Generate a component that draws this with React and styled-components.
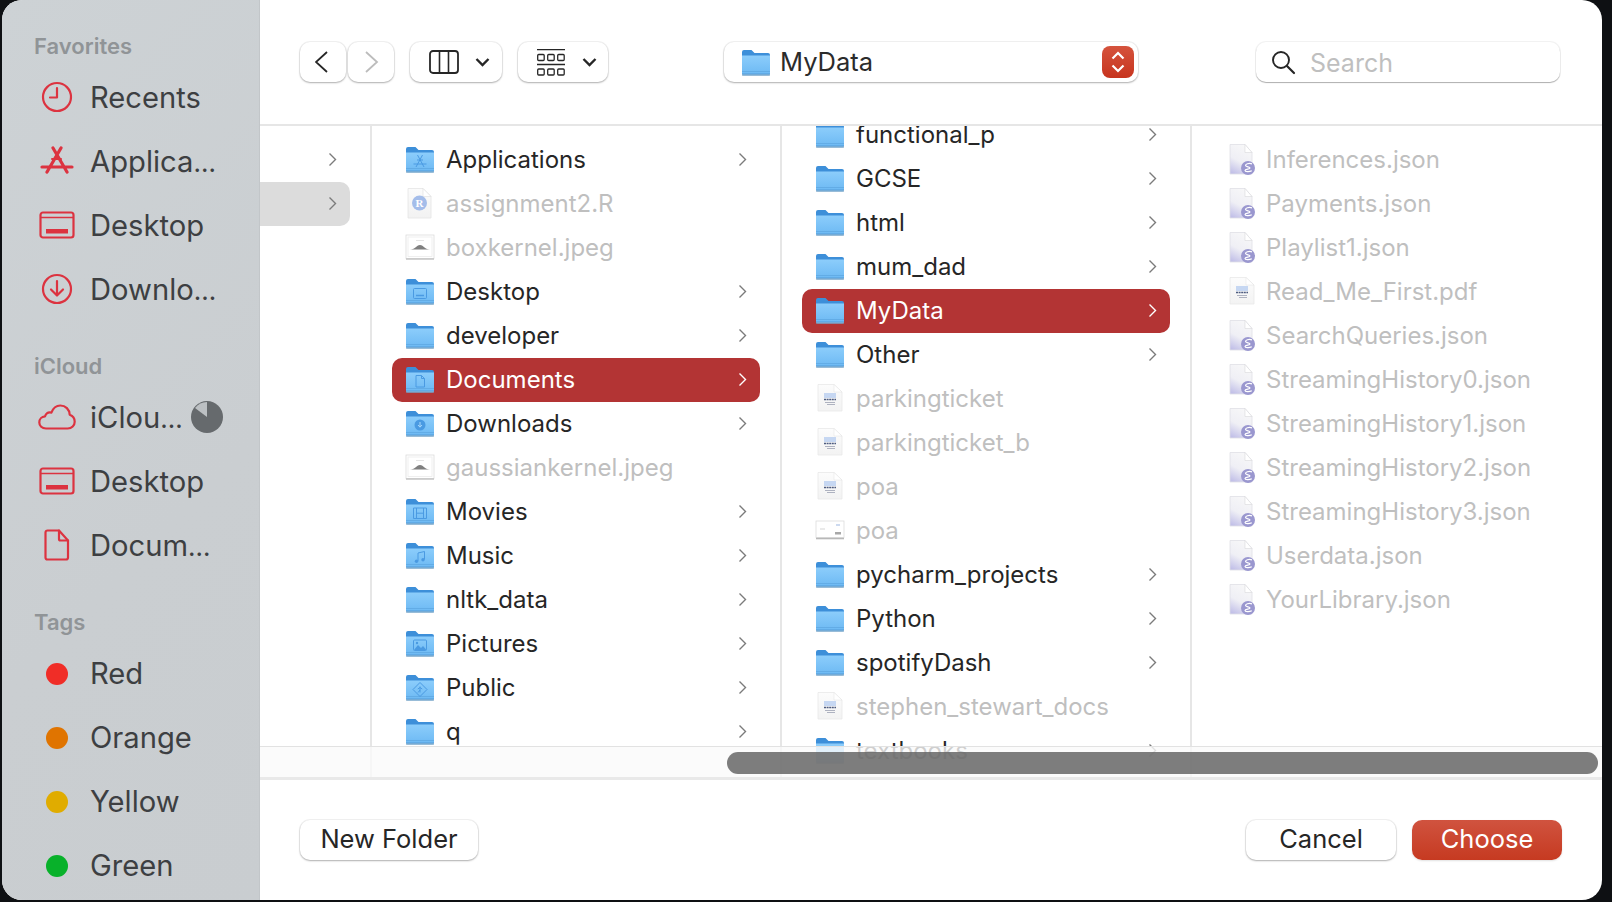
import React from "react";
import styled, { createGlobalStyle } from "styled-components";

const GlobalStyle = createGlobalStyle`
    html, body {
        margin: 0;
        padding: 0;
        height: 100%;
        background: #0e1013;
        overflow: hidden;
    }
    * {
        box-sizing: border-box;
    }
`;

const Page = styled.div`
    width: 1612px;
    height: 902px;
    padding: 0 10px 2px 2px;
    font-family: Inter, "Liberation Sans", sans-serif;
`;

const Dialog = styled.div`
    display: flex;
    width: 100%;
    height: 100%;
    background: #fff;
    border-radius: 20px;
    overflow: hidden;
`;

const Sidebar = styled.aside`
    flex: 0 0 258px;
    padding-top: 31px;
    background: linear-gradient(135deg, #cdd2d5 0%, #caced1 60%, #c9cdd0 100%);
    box-shadow: inset -1px 0 0 #c2c6c9;
    overflow: hidden;
`;

const SectionLabel = styled.div`
    height: 30px;
    margin-bottom: 4px;
    padding-left: 32px;
    font-size: 22px;
    font-weight: 600;
    line-height: 30px;
    color: #909497;
`;

const Section = styled.section`
    margin-bottom: 30px;
`;

const SideItem = styled.div`
    display: flex;
    align-items: center;
    height: 64px;
    font-size: 29.2px;
    color: #3d3f42;
`;

const SideIcon = styled.span`
    display: flex;
    flex: 0 0 88px;
    justify-content: center;
    padding-left: 22px;
`;

const Dots = styled.span`
    font-size: 26px;
`;

const Dot = styled.span`
    width: 22px;
    height: 22px;
    margin-top: 2px;
    border-radius: 50%;
    background: ${(p) => p.$color};
`;

const Pie = styled.svg`
    margin-left: 8px;
`;

const Main = styled.main`
    display: flex;
    flex: 1;
    flex-direction: column;
    min-width: 0;
`;

const Toolbar = styled.header`
    display: flex;
    flex: 0 0 126px;
    align-items: flex-start;
    padding: 42px 42px 0 40px;
    border-bottom: 2px solid #e6e6e6;
`;

const ToolButton = styled.button`
    display: flex;
    align-items: center;
    justify-content: ${(p) => (p.$pad ? "flex-start" : "center")};
    gap: ${(p) => p.$gap || 0}px;
    width: ${(p) => p.$width}px;
    height: 40px;
    margin-left: ${(p) => p.$left || 0}px;
    padding: 0 0 0 ${(p) => p.$pad || 0}px;
    border: 0;
    border-radius: 10px;
    background: #fff;
    box-shadow: 0 1px 2px rgba(0, 0, 0, 0.28), 0 0 0 1px rgba(0, 0, 0, 0.05);
`;

const PathControl = styled.div`
    display: flex;
    align-items: center;
    width: 414px;
    height: 40px;
    margin-left: 116px;
    padding: 0 4px 0 18px;
    border-radius: 10px;
    background: #fff;
    box-shadow: 0 1px 2px rgba(0, 0, 0, 0.28), 0 0 0 1px rgba(0, 0, 0, 0.05);
    font-size: 25.5px;
    color: #2b2b2b;
`;

const PathName = styled.span`
    flex: 1;
    margin: -2px 0 0 10px;
`;

const Stepper = styled.span`
    display: flex;
    align-items: center;
    justify-content: center;
    width: 32px;
    height: 32px;
    border-radius: 8px;
    background: linear-gradient(#d5533d, #c7341e);
`;

const SearchBox = styled.div`
    display: flex;
    align-items: center;
    gap: 14px;
    width: 304px;
    height: 40px;
    margin-left: 118px;
    padding-left: 15px;
    border-radius: 10px;
    background: #fff;
    box-shadow: 0 1px 1px rgba(0, 0, 0, 0.28), 0 0 0 1px rgba(0, 0, 0, 0.05);
    font-size: 25px;
    color: #bfbfbf;
`;

const SearchText = styled.span`
    margin-top: 2px;
`;

const Browser = styled.div`
    position: relative;
    display: flex;
    flex: 0 0 654px;
    border-bottom: 3px solid #e9e9e9;
    overflow: hidden;
`;

const Column = styled.div`
    flex: ${(p) => (p.$width ? `0 0 ${p.$width}px` : "1")};
    padding-top: ${(p) => p.$top}px;
    padding-left: ${(p) => p.$inset || 0}px;
    border-right: ${(p) => (p.$last ? "0" : "2px solid #e6e6e6")};
`;

const ScrolledList = styled.div`
    margin-top: ${(p) => p.$shift}px;
`;

const FirstColumnRow = styled.div`
    display: flex;
    align-items: center;
    justify-content: flex-end;
    width: 90px;
    height: 44px;
    padding: 0 13px 2px 0;
    border-radius: 0 10px 10px 0;
    background: ${(p) => (p.$selected ? "#dcdcdc" : "transparent")};
`;

const Row = styled.div`
    display: flex;
    align-items: center;
    width: 368px;
    height: 44px;
    padding: 0 13px 2px ${(p) => p.$pad || 14}px;
    border-radius: 10px;
    background: ${(p) => (p.$selected ? "#b33434" : "transparent")};
    color: ${(p) => (p.$selected ? "#fff" : p.$dim ? "#bfbfbf" : "#262626")};
    font-size: 24px;
    white-space: nowrap;
`;

const RowLabel = styled.span`
    flex: 1;
    margin-left: ${(p) => p.$gap || 12}px;
`;

const IconSlot = styled.span`
    display: flex;
    flex: 0 0 28px;
    justify-content: center;
    min-width: 0;
    svg {
        flex-shrink: 0;
    }
`;

const HScrollTrack = styled.div`
    position: absolute;
    right: 0;
    bottom: 0;
    left: 0;
    height: 31px;
    border-top: 1px solid #e2e2e2;
    background: rgba(250, 250, 250, 0.8);
`;

const HScrollThumb = styled.div`
    position: absolute;
    top: 5px;
    right: 4px;
    left: 467px;
    height: 22px;
    border-radius: 11px;
    background: rgba(96, 96, 96, 0.82);
`;

const Footer = styled.footer`
    display: flex;
    flex: 1;
    align-items: flex-start;
    justify-content: space-between;
    padding: 40px 40px 0 40px;
`;

const FooterGroup = styled.div`
    display: flex;
    gap: 16px;
`;

const ActionButton = styled.button`
    width: ${(p) => p.$width}px;
    height: 40px;
    padding: 0 0 3px;
    border: 0;
    border-radius: 10px;
    background: ${(p) => (p.$primary ? "linear-gradient(#d0533f, #c63a21)" : "#fff")};
    box-shadow: ${(p) =>
        p.$primary
            ? "0 1px 2px rgba(0, 0, 0, 0.12)"
            : "0 1px 2px rgba(0, 0, 0, 0.28), 0 0 0 1px rgba(0, 0, 0, 0.05)"};
    color: ${(p) => (p.$primary ? "#fff" : "#262626")};
    font-family: inherit;
    font-size: 25.5px;
`;

const RED = "#dc3340";

const SidebarIcon = ({ kind }) => {
    const common = { fill: "none", stroke: RED, strokeWidth: 2.2, strokeLinecap: "round", strokeLinejoin: "round" };
    if (kind === "clock") {
        return (
            <svg width="32" height="32" viewBox="0 0 32 32">
                <circle cx="16" cy="16" r="14" {...common} />
                <path d="M16 7v9.5H9" {...common} />
            </svg>
        );
    }
    if (kind === "apps") {
        return (
            <svg width="34" height="30" viewBox="0 0 34 30">
                <path d="M21 2 7 26M13 2l14 24M2 21h30" {...common} strokeWidth="3.2" />
                <path d="M12 13h9" {...common} strokeWidth="2" />
            </svg>
        );
    }
    if (kind === "desktop") {
        return (
            <svg width="36" height="28" viewBox="0 0 36 28">
                <rect x="1.5" y="1.5" width="33" height="25" rx="2.5" {...common} />
                <path d="M2 6.5h32" {...common} strokeWidth="1.6" />
                <rect x="7" y="18" width="22" height="4.5" fill={RED} />
            </svg>
        );
    }
    if (kind === "download") {
        return (
            <svg width="32" height="32" viewBox="0 0 32 32">
                <circle cx="16" cy="16" r="14" {...common} />
                <path d="M16 8v14M10 16.5l6 6 6-6" {...common} />
            </svg>
        );
    }
    if (kind === "cloud") {
        return (
            <svg width="38" height="26" viewBox="0 0 38 26">
                <path
                    d="M8 24.5C4 24.5 1.3 21.8 1.3 18.4c0-3.3 2.5-5.8 5.7-6 1-2.9 3.6-4.4 6.4-3.8C15.2 4 18.4 1.5 22.3 1.5c5.3 0 9.2 3.9 9.4 9.3 3 1.1 5 3.7 5 6.9 0 3.9-3 6.8-7 6.8z"
                    {...common}
                />
            </svg>
        );
    }
    return (
        <svg width="26" height="32" viewBox="0 0 26 32">
            <path d="M3.5 1.5H15l9 10v17a2 2 0 0 1-2 2H3.500a2 2 0 0 1-2-2v-25a2 2 0 0 1 2-2z" {...common} />
            <path d="M15 1.5V10a1.5 1.5 0 0 0 1.500 1.500H24" {...common} />
        </svg>
    );
};

const FolderGlyph = ({ kind }) => {
    const s = { fill: "none", stroke: "#4a9ae2", strokeWidth: 1, strokeLinejoin: "round" };
    switch (kind) {
        case "apps":
            return <path d="M16.5 9 10 21M11.5 9 18 21M7.5 18h13M11 14h6" {...s} />;
        case "desktop":
            return (
                <>
                    <rect x="7.5" y="10.5" width="13" height="10" rx="1" {...s} />
                    <path d="M10 17.5h8" {...s} strokeWidth="1.5" />
                </>
            );
        case "doc":
            return <path d="M10 9.5h5.5l3 3V21H10zM15.5 9.5v3h3" {...s} />;
        case "download":
            return (
                <>
                    <circle cx="14" cy="15" r="5.5" fill="#4a9ae2" />
                    <path d="M14 12v5M12 15l2 2.200 2-2.200" fill="none" stroke="#a8d8fb" strokeWidth="1" />
                </>
            );
        case "movies":
            return <path d="M7.5 10h13v10.500h-13zM10.500 10v10.500M17.500 10v10.500M10.500 15.200h7" {...s} />;
        case "music":
            return (
                <>
                    <path d="M12 19v-8l6.500-1.500v8" {...s} />
                    <circle cx="10.5" cy="19.3" r="1.7" fill="#4a9ae2" />
                    <circle cx="17" cy="17.8" r="1.7" fill="#4a9ae2" />
                </>
            );
        case "pictures":
            return (
                <>
                    <rect x="7.5" y="10" width="13" height="10.500" rx="1" {...s} />
                    <path d="M8 20l4-5 3 3 2-2 3.500 4z" fill="#4a9ae2" />
                    <circle cx="11" cy="13" r="1.2" fill="#4a9ae2" />
                </>
            );
        case "public":
            return <path d="M14 8.5l7 7-7 7-7-7zM14 12.500v6M11.800 15l2.200-1.500 2.200 1.500M14 16l-2 2.500" {...s} />;
        default:
            return null;
    }
};

const FolderIcon = ({ glyph, id }) => (
    <svg width="28" height="27" viewBox="0 0 28 27">
        <defs>
            <linearGradient id={`folder-${id}`} x1="0" y1="0" x2="0" y2="1">
                <stop offset="0" stopColor="#8ccdfb" />
                <stop offset="1" stopColor="#6bb8f3" />
            </linearGradient>
        </defs>
        <path d="M0 3a2 2 0 0 1 2-2h7.5l3 3H26a2 2 0 0 1 2 2v4H0z" fill="#3d8fd9" />
        <path d="M0 6.5h28V25a1.500 1.500 0 0 1-1.500 1.500h-25A1.500 1.500 0 0 1 0 25z" fill={`url(#folder-${id})`} />
        <path d="M0 22.5h28M0 24.5h28" stroke="#5ba5e0" strokeWidth="0.7" />
        <path d="M0 26h28" stroke="#7d9db8" strokeWidth="1" />
        <FolderGlyph kind={glyph} />
    </svg>
);

const JsonIcon = ({ id }) => (
    <svg width="26" height="31" viewBox="0 0 26 31">
        <defs>
            <linearGradient id={id} x1="0.6" y1="0" x2="0.2" y2="1">
                <stop offset="0" stopColor="#f7f7f8" />
                <stop offset="0.55" stopColor="#efeff5" />
                <stop offset="1" stopColor="#c2c0e8" />
            </linearGradient>
        </defs>
        <path d="M1 .5h15l7 8V30H1z" fill={`url(#${id})`} stroke="#dfdfe6" strokeWidth="0.8" />
        <path d="M16 .5v8h7z" fill="#fff" stroke="#d8d8dc" strokeWidth="0.6" />
        <circle cx="19" cy="24" r="7" fill="#9a97cf" />
        <path d="M23 19.800c-3.500-1-6.500.4-6.500 1.800s4.500 1.200 4.500 2.400-5 1-5 2.400 4 1.700 6.800.4" fill="none" stroke="#fff" strokeWidth="1.200" />
    </svg>
);

const PdfIcon = ({ id }) => (
    <svg width="26" height="28" viewBox="0 0 26 28">
        <defs>
            <linearGradient id={id} x1="0" y1="0" x2="0" y2="1">
                <stop offset="0" stopColor="#fcfcfc" />
                <stop offset="1" stopColor="#f3f3f3" />
            </linearGradient>
        </defs>
        <path d="M1 .5h16l8 7.500V27H1z" fill={`url(#${id})`} stroke="#e8e8e8" strokeWidth="0.8" />
        <path d="M17 .5v7.500h8z" fill="#fff" stroke="#e2e2e2" strokeWidth="0.5" />
        <rect x="7" y="9" width="12" height="5" fill="#c6d7f2" />
        <path d="M7 15.500h12" stroke="#4e5c80" strokeWidth="1.600" strokeDasharray="2 .6" />
        <path d="M8 18.500h10M10 20.500h8" stroke="#aeb2c0" strokeWidth="1" />
    </svg>
);

const RDocIcon = ({ id }) => (
    <svg width="26" height="31" viewBox="0 0 26 31">
        <defs>
            <linearGradient id={id} x1="0" y1="0" x2="0" y2="1">
                <stop offset="0" stopColor="#fbfbfb" />
                <stop offset="1" stopColor="#f2f2f2" />
            </linearGradient>
        </defs>
        <path d="M1 .5h15l8 8V30H1z" fill={`url(#${id})`} stroke="#e4e4e4" strokeWidth="0.8" />
        <path d="M16 .5v8h8z" fill="#fff" stroke="#dedede" strokeWidth="0.6" />
        <circle cx="12.500" cy="15" r="7.500" fill="#a4bdea" />
        <text x="12.500" y="19" textAnchor="middle" fontSize="11" fontWeight="700" fontFamily="'Liberation Serif', serif" fill="#fff">
            R
        </text>
    </svg>
);

const JpegIcon = () => (
    <svg width="30" height="26" viewBox="0 0 30 26">
        <rect x="1" y="1" width="28" height="23.5" fill="#fff" stroke="#dcdcdc" strokeWidth="0.8" />
        <rect x="3" y="3" width="24" height="19.500" fill="#fff" stroke="#ececec" strokeWidth="0.8" />
        <path d="M5 15.500c6 0 6-4.500 10-4.500s4 4.500 10 4.500z" fill="#7f7f7f" />
        <path d="M11 6.500h8" stroke="#dddddd" strokeWidth="0.8" />
        <path d="M1 25h28" stroke="#c0c0c0" strokeWidth="1.400" />
    </svg>
);

const WideDocIcon = () => (
    <svg width="30" height="20" viewBox="0 0 30 20">
        <rect x="1" y="1" width="28" height="16.500" fill="#fff" stroke="#dcdcdc" strokeWidth="0.8" />
        <path d="M5 9h5" stroke="#d5d5d5" strokeWidth="1" />
        <path d="M21 5h4" stroke="#b8cbea" strokeWidth="1.400" />
        <rect x="20" y="12" width="6" height="2.500" fill="#a8a8a8" />
        <path d="M1 18.500h28" stroke="#b8b8b8" strokeWidth="1.600" />
    </svg>
);

const RowChevron = ({ color = "#7b7b7b" }) => (
    <svg width="9" height="15" viewBox="0 0 9 15">
        <path d="M1.5 1.5l6 6-6 6" fill="none" stroke={color} strokeWidth="1.400" />
    </svg>
);

const ToolChevron = () => (
    <svg width="15" height="10" viewBox="0 0 15 10">
        <path d="M1.500 2l6 6 6-6" fill="none" stroke="#262626" strokeWidth="2.400" />
    </svg>
);

const FileIcon = ({ type, id }) => {
    if (type === "json") return <JsonIcon id={id} />;
    if (type === "pdf") return <PdfIcon id={id} />;
    if (type === "r") return <RDocIcon id={id} />;
    if (type === "jpeg") return <JpegIcon />;
    if (type === "wide") return <WideDocIcon />;
    return <FolderIcon glyph={type} id={id} />;
};

const ListRow = ({ item, id, pad, gap }) => {
    const isFolder = !["json", "pdf", "r", "jpeg", "wide"].includes(item.type);
    return (
        <Row $selected={item.selected} $dim={!isFolder} $pad={pad}>
            <IconSlot>
                <FileIcon type={item.type} id={id} />
            </IconSlot>
            <RowLabel $gap={gap}>{item.name}</RowLabel>
            {isFolder && <RowChevron color={item.selected ? "#fff" : "#7b7b7b"} />}
        </Row>
    );
};

const homeItems = [
    { name: "Applications", type: "apps" },
    { name: "assignment2.R", type: "r" },
    { name: "boxkernel.jpeg", type: "jpeg" },
    { name: "Desktop", type: "desktop" },
    { name: "developer", type: "folder" },
    { name: "Documents", type: "doc", selected: true },
    { name: "Downloads", type: "download" },
    { name: "gaussiankernel.jpeg", type: "jpeg" },
    { name: "Movies", type: "movies" },
    { name: "Music", type: "music" },
    { name: "nltk_data", type: "folder" },
    { name: "Pictures", type: "pictures" },
    { name: "Public", type: "public" },
    { name: "q", type: "folder" },
];

const documentItems = [
    { name: "functional_p", type: "folder" },
    { name: "GCSE", type: "folder" },
    { name: "html", type: "folder" },
    { name: "mum_dad", type: "folder" },
    { name: "MyData", type: "folder", selected: true },
    { name: "Other", type: "folder" },
    { name: "parkingticket", type: "pdf" },
    { name: "parkingticket_b", type: "pdf" },
    { name: "poa", type: "pdf" },
    { name: "poa", type: "wide" },
    { name: "pycharm_projects", type: "folder" },
    { name: "Python", type: "folder" },
    { name: "spotifyDash", type: "folder" },
    { name: "stephen_stewart_docs", type: "pdf" },
    { name: "textbooks", type: "folder" },
];

const dataItems = [
    { name: "Inferences.json", type: "json" },
    { name: "Payments.json", type: "json" },
    { name: "Playlist1.json", type: "json" },
    { name: "Read_Me_First.pdf", type: "pdf" },
    { name: "SearchQueries.json", type: "json" },
    { name: "StreamingHistory0.json", type: "json" },
    { name: "StreamingHistory1.json", type: "json" },
    { name: "StreamingHistory2.json", type: "json" },
    { name: "StreamingHistory3.json", type: "json" },
    { name: "Userdata.json", type: "json" },
    { name: "YourLibrary.json", type: "json" },
];

const sidebarSections = [
    {
        title: "Favorites",
        items: [
            { name: "Recents", icon: "clock" },
            { name: "Applica", cut: true, icon: "apps" },
            { name: "Desktop", icon: "desktop" },
            { name: "Downlo", cut: true, icon: "download" },
        ],
    },
    {
        title: "iCloud",
        items: [
            { name: "iClou", cut: true, icon: "cloud", pie: true },
            { name: "Desktop", icon: "desktop" },
            { name: "Docum", cut: true, icon: "doc" },
        ],
    },
    {
        title: "Tags",
        items: [
            { name: "Red", dot: "#f02d27" },
            { name: "Orange", dot: "#e07400" },
            { name: "Yellow", dot: "#e0ac00" },
            { name: "Green", dot: "#08b12a" },
        ],
    },
];

const App = () => {
    return (
        <Page>
            <GlobalStyle />
            <Dialog>
                <Sidebar>
                    {sidebarSections.map((section) => (
                        <Section key={section.title}>
                            <SectionLabel>{section.title}</SectionLabel>
                            {section.items.map((item) => (
                                <SideItem key={item.name}>
                                    <SideIcon>
                                        {item.dot ? <Dot $color={item.dot} /> : <SidebarIcon kind={item.icon} />}
                                    </SideIcon>
                                    <span>
                                        {item.name}
                                        {item.cut && <Dots>…</Dots>}
                                    </span>
                                    {item.pie && (
                                        <Pie width="32" height="32" viewBox="0 0 32 32">
                                            <circle cx="16" cy="16" r="16" fill="#666a6d" />
                                            <path d="M16 16V1A15 15 0 0 0 4 7z" fill="#bcc0c3" />
                                        </Pie>
                                    )}
                                </SideItem>
                            ))}
                        </Section>
                    ))}
                </Sidebar>
                <Main>
                    <Toolbar>
                        <ToolButton $width={46}>
                            <svg width="16" height="24" viewBox="0 0 16 24">
                                <path d="M12 2 1 12l11 10" fill="none" stroke="#262626" strokeWidth="1.800" />
                            </svg>
                        </ToolButton>
                        <ToolButton $width={46} $left={2}>
                            <svg width="16" height="24" viewBox="0 0 16 24">
                                <path d="M3 2l11 10L3 22" fill="none" stroke="#bcbcbc" strokeWidth="1.800" />
                            </svg>
                        </ToolButton>
                        <ToolButton $width={92} $left={16} $pad={19} $gap={16}>
                            <svg width="30" height="24" viewBox="0 0 30 24">
                                <rect x="1" y="1" width="28" height="22" rx="3" fill="none" stroke="#262626" strokeWidth="1.800" />
                                <path d="M10.500 1v22M19.500 1v22" stroke="#262626" strokeWidth="1.600" />
                            </svg>
                            <ToolChevron />
                        </ToolButton>
                        <ToolButton $width={90} $left={16} $pad={19} $gap={17}>
                            <svg width="28" height="27" viewBox="0 0 28 27">
                                <path d="M0 .7h28M0 15.500h28" stroke="#262626" strokeWidth="1.300" />
                                <g fill="none" stroke="#262626" strokeWidth="1.300">
                                    <rect x=".7" y="5.500" width="6.500" height="6" rx="1" />
                                    <rect x="10.700" y="5.500" width="6.500" height="6" rx="1" />
                                    <rect x="20.700" y="5.500" width="6.500" height="6" rx="1" />
                                    <rect x=".7" y="20" width="6.500" height="6" rx="1" />
                                    <rect x="10.700" y="20" width="6.500" height="6" rx="1" />
                                    <rect x="20.700" y="20" width="6.500" height="6" rx="1" />
                                </g>
                            </svg>
                            <ToolChevron />
                        </ToolButton>
                        <PathControl>
                            <FolderIcon id="path" />
                            <PathName>MyData</PathName>
                            <Stepper>
                                <svg width="16" height="24" viewBox="0 0 16 24">
                                    <path d="M2.500 8.500 8 3l5.500 5.500M2.500 15.500 8 21l5.500-5.500" fill="none" stroke="#fff" strokeWidth="2.200" />
                                </svg>
                            </Stepper>
                        </PathControl>
                        <SearchBox>
                            <svg width="25" height="25" viewBox="0 0 25 25">
                                <circle cx="10" cy="10" r="8" fill="none" stroke="#262626" strokeWidth="1.900" />
                                <path d="M16 16l7 7" stroke="#262626" strokeWidth="2.200" strokeLinecap="round" />
                            </svg>
                            <SearchText>Search</SearchText>
                        </SearchBox>
                    </Toolbar>
                    <Browser>
                        <Column $width={112} $top={12}>
                            <FirstColumnRow>
                                <RowChevron />
                            </FirstColumnRow>
                            <FirstColumnRow $selected>
                                <RowChevron />
                            </FirstColumnRow>
                        </Column>
                        <Column $width={410} $top={12} $inset={20}>
                            {homeItems.map((item) => (
                                <ListRow key={item.name} item={item} id={`home-${item.name}`} />
                            ))}
                        </Column>
                        <Column $width={410} $top={0} $inset={20}>
                            <ScrolledList $shift={-13}>
                                {documentItems.map((item, i) => (
                                    <ListRow key={i} item={item} id={`docs-${i}`} />
                                ))}
                            </ScrolledList>
                        </Column>
                        <Column $last $top={12} $inset={35}>
                            {dataItems.map((item, i) => (
                                <ListRow key={i} item={item} id={`data-${i}`} pad={1} gap={10} />
                            ))}
                        </Column>
                        <HScrollTrack>
                            <HScrollThumb />
                        </HScrollTrack>
                    </Browser>
                    <Footer>
                        <ActionButton $width={178}>New Folder</ActionButton>
                        <FooterGroup>
                            <ActionButton $width={150}>Cancel</ActionButton>
                            <ActionButton $width={150} $primary>
                                Choose
                            </ActionButton>
                        </FooterGroup>
                    </Footer>
                </Main>
            </Dialog>
        </Page>
    );
};

export default App;
